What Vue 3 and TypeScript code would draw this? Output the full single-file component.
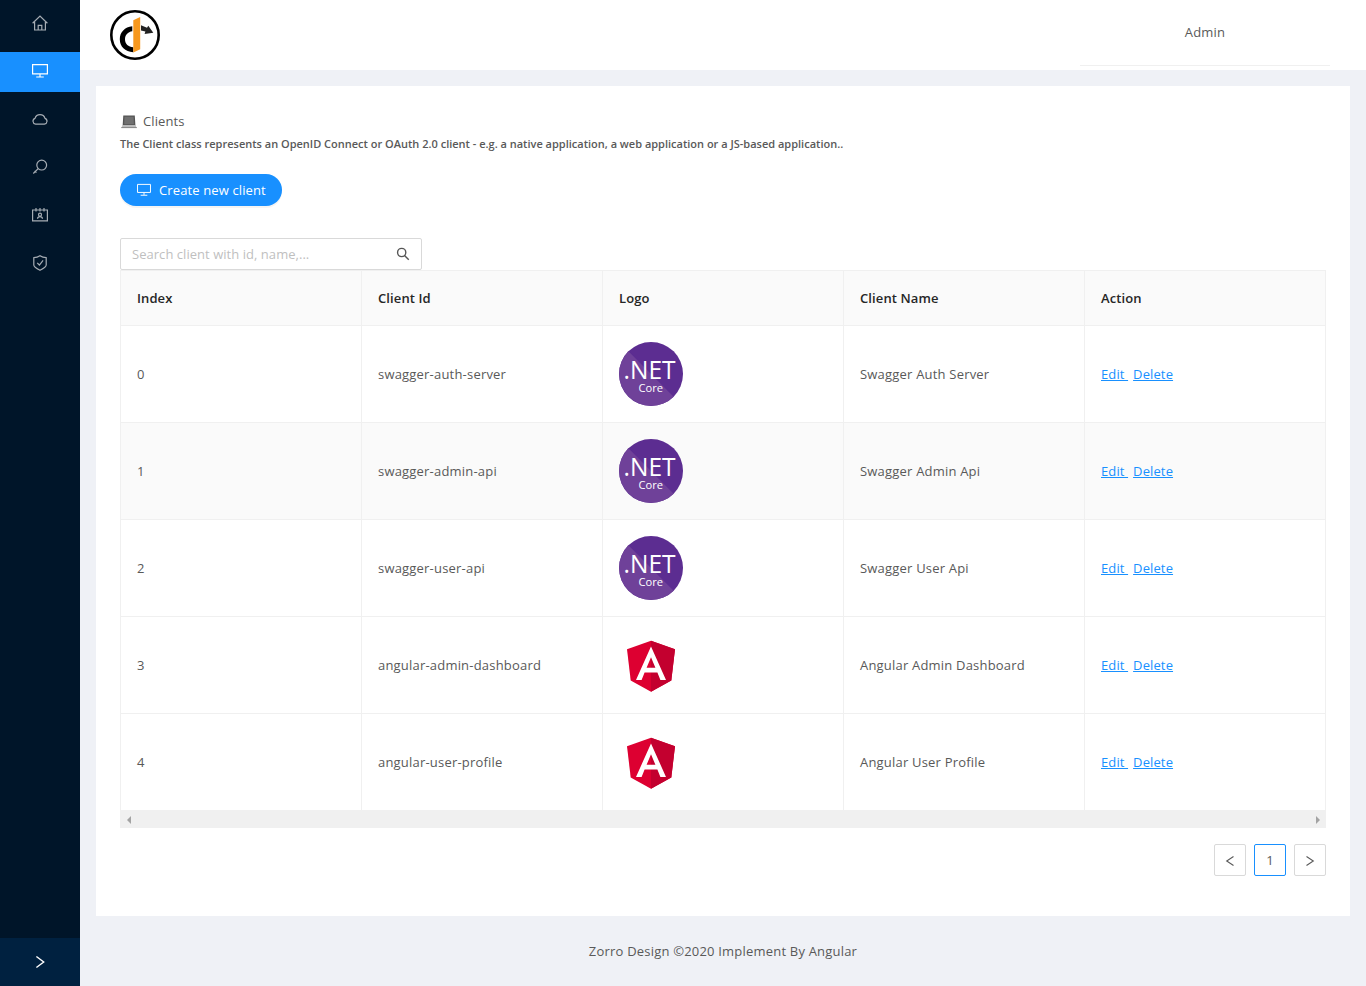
<script setup lang="ts">
interface Client {
  id: string
  name: string
  logo: 'net' | 'angular'
}

const columns: string[] = ['Index', 'Client Id', 'Logo', 'Client Name', 'Action']

const clients: Client[] = [
  { id: 'swagger-auth-server', name: 'Swagger Auth Server', logo: 'net' },
  { id: 'swagger-admin-api', name: 'Swagger Admin Api', logo: 'net' },
  { id: 'swagger-user-api', name: 'Swagger User Api', logo: 'net' },
  { id: 'angular-admin-dashboard', name: 'Angular Admin Dashboard', logo: 'angular' },
  { id: 'angular-user-profile', name: 'Angular User Profile', logo: 'angular' },
]
</script>

<template>
  <div class="layout">
    <aside class="sider">
      <nav class="menu">
        <a class="item">
          <svg viewBox="0 0 16 16"><path d="M.6 8.3 8 1l7.4 7.3M2.600 7v8h10.800V7M6.200 15v-4.700h3.600V15" /></svg>
        </a>
        <a class="item active">
          <svg viewBox="0 0 16 16"><path d="M.6 1.600h14.800v9.200H.6zM8 11v2.600M4.200 14h7.600" /></svg>
        </a>
        <a class="item">
          <svg viewBox="0 0 16 16"><path d="M3.600 13.200A3 3 0 0 1 3 7.400a5.200 5.200 0 0 1 10 0 3 3 0 0 1-.6 5.800z" /></svg>
        </a>
        <a class="item">
          <svg viewBox="0 0 16 16"><circle cx="9.700" cy="6.100" r="4.900" /><path d="M6.200 9.600 1.300 14.500M2.700 11.900l1.700 1.800" /></svg>
        </a>
        <a class="item">
          <svg viewBox="0 0 16 16"><path d="M.6 3h14.800v10.800H.6zM4 1v3.400M8 1v3.400M12 1v3.400M5.500 11.800c.2-3 4.800-3 5 0" /><circle cx="8" cy="7.700" r="1.500" /></svg>
        </a>
        <a class="item">
          <svg viewBox="0 0 16 16"><path d="M8 .7c1.700 1.200 4 1.900 6.200 2v7.400c0 2-3.700 4-6.200 5.200-2.500-1.200-6.200-3.200-6.200-5.200V2.700C4 2.600 6.300 1.900 8 .7zM5.200 7.800l2.200 2.200 3.700-4.700" /></svg>
        </a>
      </nav>
      <div class="trigger">
        <svg viewBox="0 0 16 16"><path d="M4.400 2.500 11.700 8l-7.300 5.500" /></svg>
      </div>
    </aside>

    <div class="main">
      <header class="header">
        <svg class="brand" viewBox="0 0 50 50">
          <circle cx="25" cy="25" r="23.700" fill="#fff" stroke="#000" stroke-width="2.600" />
          <path d="M22.300 16.300C14.800 17 9.800 22.300 9.800 29.300c0 7.300 5.200 12.500 13.500 12.900V37.300c-5-.2-8.300-3.300-8.300-8 0-4.300 2.800-7.300 7.300-8z" />
          <path d="M23.300 10.300 30.200 7v32.200l-6.900 3.200z" fill="#f7981d" />
          <path d="M31 15.300 37 17.800l1.300-2 5 6.900-8.700 1.400.8-2.700-4.400-1z" fill="#222" />
        </svg>
        <div class="user">Admin</div>
      </header>

      <main class="card">
        <div class="title">
          <svg viewBox="0 0 16 14">
            <path d="M2.300.6h11.500l.6 9.800H1.700z" fill="#555" />
            <path d="M3.500 1.800h9.100l.3 7.500H3.200z" fill="#707070" />
            <path d="M1.700 10h12.700l1.300 2.700H.4z" fill="#bbb" />
            <path d="M.3 12.100h15.500v1H.3z" fill="#858585" />
          </svg>
          <span>Clients</span>
        </div>
        <div class="desc">The Client class represents an OpenID Connect or OAuth 2.0 client - e.g. a native application, a web application or a JS-based application..</div>
        <button class="create">
          <svg viewBox="0 0 16 16"><path d="M.6 1.600h14.800v9.200H.6zM8 11v2.600M4.200 14h7.600" /></svg>
          <span>Create new client</span>
        </button>
        <div class="search">
          <span>Search client with id, name,...</span>
          <svg viewBox="0 0 16 16"><circle cx="6.500" cy="6.300" r="4.700" /><path d="m10 9.900 4.600 4.600" /></svg>
        </div>

        <div class="table">
          <div class="row head">
            <div v-for="column in columns" :key="column" class="cell"><span>{{ column }}</span></div>
          </div>
          <div v-for="(client, index) in clients" :key="client.id" class="row" :class="{ hover: index === 1 }">
            <div class="cell"><span>{{ index }}</span></div>
            <div class="cell"><span>{{ client.id }}</span></div>
            <div class="cell">
              <svg v-if="client.logo === 'net'" class="logo" viewBox="0 0 64 64">
                <circle cx="32" cy="32" r="32" fill="#5c2d91" />
                <path d="M9.373 9.373A32 32 0 0 0 54.627 54.627z" fill="#6f4199" />
                <text class="net" x="4.500" y="37" textLength="52" lengthAdjust="spacingAndGlyphs">.NET</text>
                <text class="core" x="19.500" y="50" textLength="24.500" lengthAdjust="spacingAndGlyphs">Core</text>
              </svg>
              <svg v-else class="logo" viewBox="0 0 64 64">
                <g transform="translate(0 1)">
                  <path d="M32 6.700 8 15.200l3.700 31.400L32 57.800l20.300-11.200L56 15.200z" fill="#dd0031" />
                  <path d="M32 6.700v51.100l20.300-11.200L56 15.200z" fill="#c3002f" />
                  <path d="M32 12.400 17 46h5.600l3-7.500h12.800l3 7.500H47zm4.400 21.400h-8.800L32 23.200z" fill="#fff" />
                </g>
              </svg>
            </div>
            <div class="cell"><span>{{ client.name }}</span></div>
            <div class="cell actions"><a>Edit&nbsp;</a><a>Delete</a></div>
          </div>
        </div>
        <div class="scrollbar"><i class="left"></i><i class="right"></i></div>

        <div class="pages">
          <span class="page"><svg viewBox="0 0 12 12"><path d="M9.500 1.500 2.700 6l6.800 4.500" /></svg></span>
          <span class="page current">1</span>
          <span class="page"><svg viewBox="0 0 12 12"><path d="M2.500 1.500 9.300 6l-6.800 4.500" /></svg></span>
        </div>
      </main>

      <footer class="footer"><span>Zorro Design ©2020 Implement By Angular</span></footer>
    </div>
  </div>
</template>

<style>
body {
  margin: 0;
  overflow: hidden;
}
</style>

<style scoped>
* {
  box-sizing: border-box;
}
.layout {
  display: flex;
  width: 100%;
  height: 986px;
  background: #eff1f6;
  color: #595959;
  font: 13px/22px "Open Sans", "Noto Sans", sans-serif;
  letter-spacing: 0.2px;
  white-space: nowrap;
}
svg {
  display: block;
  flex: none;
}
.sider {
  display: flex;
  flex-direction: column;
  justify-content: space-between;
  width: 80px;
  background: #001529;
}
.menu {
  display: flex;
  flex-direction: column;
  gap: 8px;
  padding-top: 4px;
}
.item {
  display: flex;
  justify-content: center;
  height: 40px;
  padding-top: 11px;
}
.item svg,
.trigger svg {
  width: 16px;
  height: 16px;
  fill: none;
  stroke: #a6adb4;
  stroke-width: 1.2;
}
.item.active {
  background: #1890ff;
}
.item.active svg {
  stroke: #fff;
}
.trigger {
  display: grid;
  place-items: center;
  height: 48px;
  background: #002140;
}
.trigger svg {
  stroke: #fff;
  stroke-width: 1.4;
}
.main {
  flex: 1;
}
.header {
  display: flex;
  justify-content: space-between;
  height: 70px;
  padding: 0 36px 0 30px;
  background: #fff;
}
.brand {
  width: 50px;
  height: 50px;
  margin-top: 10px;
}
.user {
  width: 250px;
  height: 66px;
  border-bottom: 1px solid #f0f0f0;
  line-height: 64px;
  text-align: center;
}
.card {
  display: flex;
  flex-direction: column;
  height: 830px;
  margin: 16px 16px 0;
  padding: 24px;
  background: #fff;
}
.title {
  display: flex;
  align-items: center;
  gap: 6px;
  height: 22px;
  padding-left: 1px;
  letter-spacing: 0.1px;
}
.title svg {
  width: 16px;
  height: 14px;
  margin-top: 1px;
}
.desc {
  height: 24px;
  font-size: 11px;
  font-weight: 600;
  letter-spacing: 0;
  line-height: 24px;
}
.create {
  display: flex;
  align-items: center;
  gap: 8px;
  width: 162px;
  height: 32px;
  margin: 18px 0 32px;
  padding: 0 0 0 17px;
  border: 0;
  border-radius: 16px;
  background: #1890ff;
  box-shadow: 0 2px 0 rgba(0, 0, 0, 0.045);
  color: #fff;
  font: inherit;
  letter-spacing: 0.12px;
}
.create svg {
  width: 14px;
  height: 14px;
  fill: none;
  stroke: #fff;
  stroke-width: 1.1;
}
.search {
  display: flex;
  align-items: center;
  justify-content: space-between;
  width: 302px;
  height: 32px;
  padding: 0 11px;
  border: 1px solid #d9d9d9;
  border-radius: 2px;
  color: #bfbfbf;
  letter-spacing: 0.04px;
}
.search svg {
  width: 14px;
  height: 14px;
  fill: none;
  stroke: #555;
  stroke-width: 1.6;
}
.table {
  border-top: 1px solid #f0f0f0;
  border-left: 1px solid #f0f0f0;
}
.row {
  display: grid;
  grid-template-columns: repeat(5, 1fr);
  height: 97px;
}
.head {
  height: 55px;
  background: #fafafa;
  color: #262626;
  font-weight: 600;
  letter-spacing: 0.1px;
}
.hover {
  background: #fafafa;
}
.cell {
  display: flex;
  align-items: center;
  padding: 0 16px;
  border-right: 1px solid #f0f0f0;
  border-bottom: 1px solid #f0f0f0;
}
.logo {
  width: 64px;
  height: 64px;
}
.net,
.core {
  fill: #fff;
  font-family: "Open Sans", sans-serif;
  letter-spacing: 0;
}
.net {
  font-size: 25px;
}
.core {
  font-size: 11.5px;
}
.actions {
  gap: 5px;
  color: #1890ff;
  letter-spacing: 0.12px;
}
.actions a {
  text-decoration: underline;
}
.scrollbar {
  display: flex;
  align-items: center;
  justify-content: space-between;
  height: 17px;
  padding: 0 6px;
  background: #f0f0f0;
}
.scrollbar i {
  border: 4px solid transparent;
}
.scrollbar .left {
  margin-left: 1px;
  border-left-width: 0;
  border-right-color: #a3a3a3;
}
.scrollbar .right {
  border-right-width: 0;
  border-left-color: #a3a3a3;
}
.pages {
  display: flex;
  justify-content: flex-end;
  gap: 8px;
  margin-top: 16px;
}
.page {
  display: grid;
  place-items: center;
  width: 32px;
  height: 32px;
  border: 1px solid #d9d9d9;
  border-radius: 2px;
}
.page svg {
  width: 12px;
  height: 12px;
  margin-top: 2px;
  fill: none;
  stroke: #595959;
  stroke-width: 1.1;
}
.page.current {
  border-color: #1890ff;
}
.footer {
  padding-top: 24px;
  text-align: center;
}
</style>
